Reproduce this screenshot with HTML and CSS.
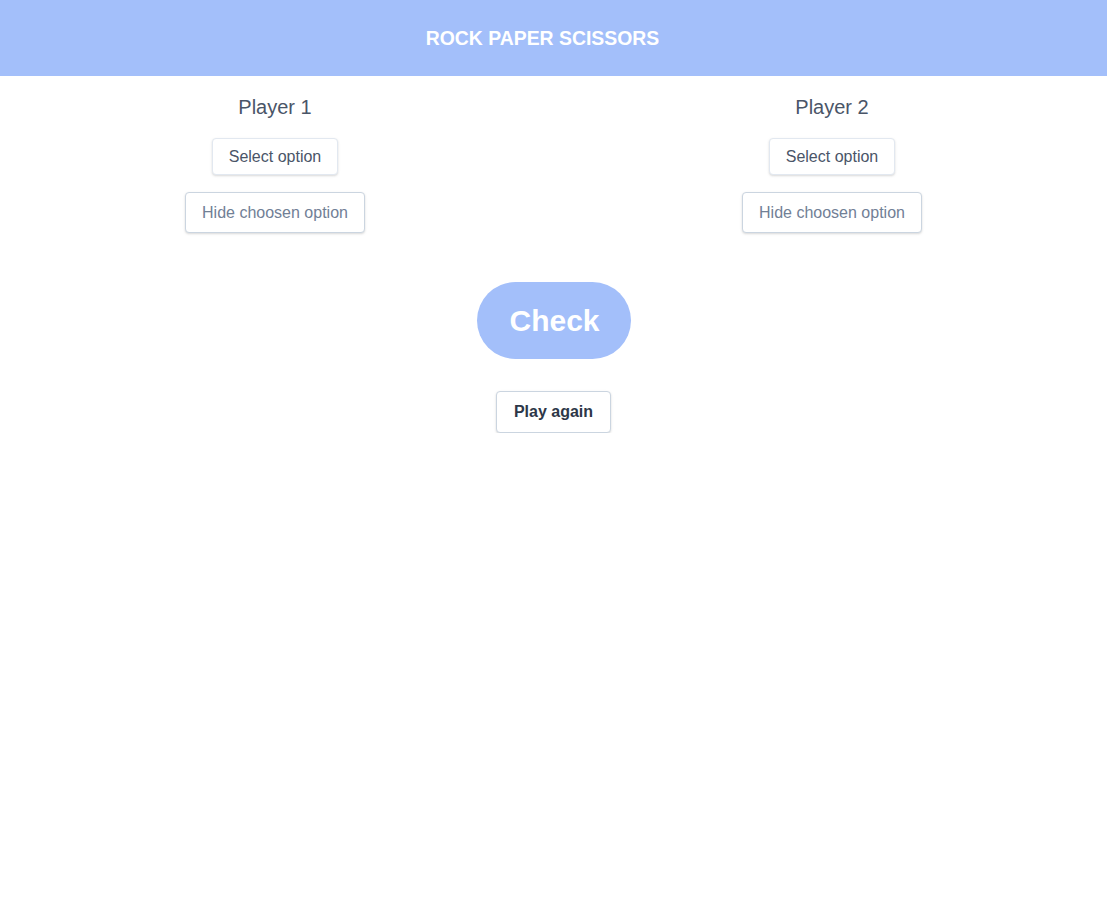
FILE: index.html
```html
<!DOCTYPE html>
<html>
<head>
<meta charset="utf-8">
<link rel="stylesheet" href="styles.css">
</head>
<body>
<header class="header"><h1 class="title">ROCK PAPER SCISSORS</h1></header>
<main class="main">
  <div class="players">
    <div class="player">
      <h2 class="player-name">Player 1</h2>
      <button class="btn btn-select">Select option</button>
      <button class="btn btn-hide">Hide choosen option</button>
    </div>
    <div class="player">
      <h2 class="player-name">Player 2</h2>
      <button class="btn btn-select">Select option</button>
      <button class="btn btn-hide">Hide choosen option</button>
    </div>
  </div>
  <button class="check">Check</button>
  <button class="btn btn-again">Play again</button>
</main>
</body>
</html>
```
FILE: styles.css
```css
* { box-sizing: border-box; }
body {
  margin: 0;
  font-family: "Liberation Sans", Arial, sans-serif;
  background: #fff;
}
.header {
  height: 76px;
  background: #a3bffa;
  display: flex;
  align-items: center;
  justify-content: center;
}
.title {
  margin: 0 22px 0 0;
  color: #fff;
  font-size: 19.4px;
  font-weight: 700;
  letter-spacing: 0;
}
.main {
  display: flex;
  flex-direction: column;
  align-items: center;
}
.players {
  display: flex;
  justify-content: center;
  gap: 157px;
  width: 100%;
}
.player {
  width: 400px;
  display: flex;
  flex-direction: column;
  align-items: center;
}
.player-name {
  margin: 19px 0 0;
  line-height: 24px;
  font-size: 20px;
  font-weight: 400;
  color: #4a5568;
}
.btn {
  font-family: inherit;
  font-size: 16px;
  background: #fff;
  border: 1px solid #e2e8f0;
  border-radius: 4px;
  box-shadow: 0 1px 3px rgba(0,0,0,0.1), 0 1px 2px rgba(0,0,0,0.06);
  cursor: pointer;
}
.btn-select {
  margin-top: 19px;
  height: 37px;
  padding: 0 16px;
  color: #4a5568;
}
.btn-hide {
  margin-top: 17px;
  height: 41px;
  padding: 0 16px;
  color: #718096;
  border-color: #cbd5e0;
}
.check {
  margin-top: 49px;
  width: 154px;
  height: 77px;
  border: none;
  border-radius: 39px;
  background: #a3bffa;
  color: #fff;
  font-family: inherit;
  font-size: 30px;
  font-weight: 700;
  padding: 0 0 0 2px;
}
.btn-again {
  margin-top: 32px;
  height: 42px;
  padding: 0 17px;
  font-weight: 700;
  color: #2d3748;
  border-color: #cbd5e0;
}
```
